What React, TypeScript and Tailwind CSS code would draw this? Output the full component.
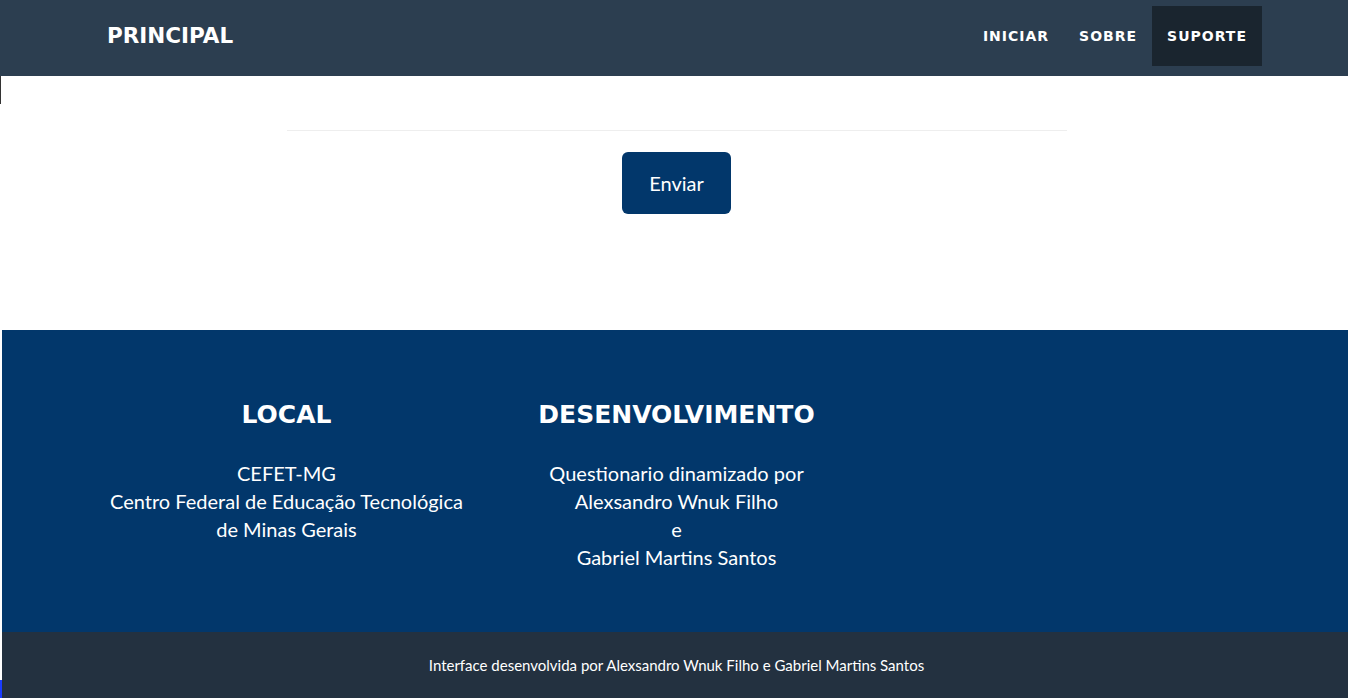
import React from "react";

const heading = { fontFamily: '"DejaVu Sans", "Liberation Sans", sans-serif' };

export default function App() {
  return (
    <div className="relative min-h-[698px] w-full bg-white" style={{ fontFamily: 'Lato, "Open Sans", sans-serif' }}>
      <nav className="h-[76px] w-full bg-[#2c3e50]">
        <div className="mx-auto flex h-full w-[1170px] items-start justify-between">
          <a className="ml-[18px] mt-[22px] text-[21.5px] font-bold leading-[28px] text-white" style={heading}>
            PRINCIPAL
          </a>
          <ul className="mr-[-3px] mt-[6px] flex">
            <li className="flex h-[60px] items-center px-[15px] text-[14px] font-bold tracking-[1px] text-white" style={heading}>INICIAR</li>
            <li className="flex h-[60px] items-center px-[15px] text-[14px] font-bold tracking-[1px] text-white" style={heading}>SOBRE</li>
            <li className="flex h-[60px] items-center bg-[#1a252f] px-[15px] text-[14px] font-bold tracking-[1px] text-white" style={heading}>SUPORTE</li>
          </ul>
        </div>
      </nav>
      <div className="absolute left-0 top-[76px] h-[28px] w-[1px] bg-[#333]" />
      <div className="absolute bottom-0 left-0 h-[18px] w-[2px] bg-[#1a3cff]" />

      <main className="ml-[2px]">
        <section className="flex h-[254px] flex-col items-center pl-[3px]">
          <div className="ml-[1px] mt-[54px] h-px w-[780px] bg-[#eeeeee]" />
          <button className="mt-[21px] h-[62px] w-[109px] rounded-[6px] bg-[#02376b] text-[20px] text-white">
            Enviar
          </button>
        </section>

        <footer>
          <div className="h-[302px] bg-[#02376b] pl-[3px] text-white">
            <div className="mx-auto flex w-[1170px] pt-[70px]">
              <div className="flex w-[390px] flex-col items-center px-[15px]">
                <h3 className="text-[25px] font-bold leading-[30px]" style={heading}>LOCAL</h3>
                <p className="mt-[29px] text-center text-[20px] leading-[28px]">
                  CEFET-MG
                  <br />
                  Centro Federal de Educação Tecnológica
                  <br />
                  de Minas Gerais
                </p>
              </div>
              <div className="flex w-[390px] flex-col items-center px-[15px]">
                <h3 className="text-[25px] font-bold leading-[30px]" style={heading}>DESENVOLVIMENTO</h3>
                <p className="mt-[29px] text-center text-[20px] leading-[28px]">
                  Questionario dinamizado por
                  <br />
                  Alexsandro Wnuk Filho
                  <br />
                  e
                  <br />
                  Gabriel Martins Santos
                </p>
              </div>
              <div className="w-[390px]" />
            </div>
          </div>
          <div className="flex h-[66px] items-center justify-center bg-[#233140] pl-[3px] text-[15px] text-white">
            Interface desenvolvida por Alexsandro Wnuk Filho e Gabriel Martins Santos
          </div>
        </footer>
      </main>
    </div>
  );
}
